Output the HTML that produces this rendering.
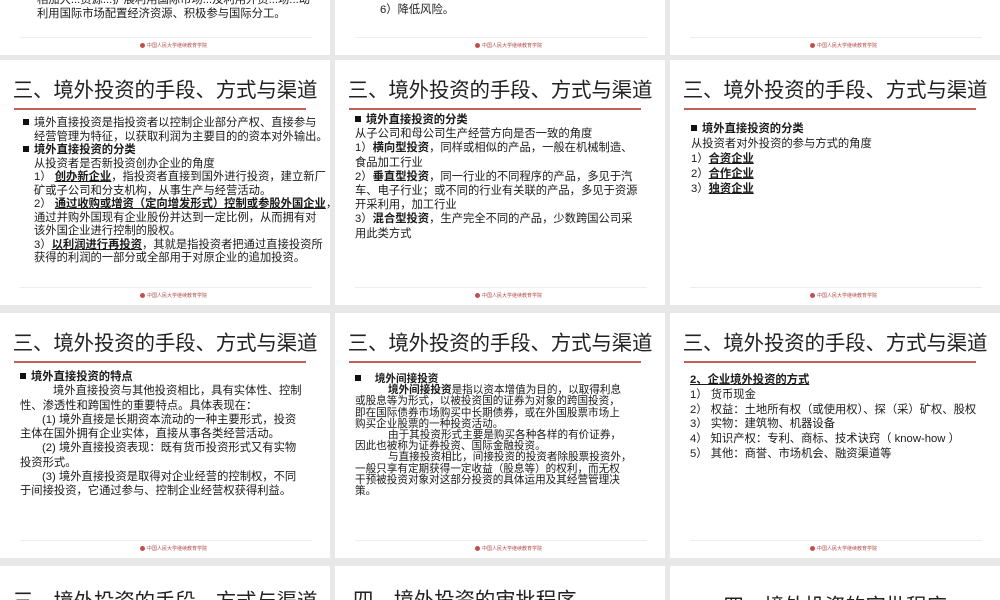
<!DOCTYPE html>
<html style="width:1000px;height:600px;overflow:hidden"><head><meta charset="utf-8"><style>
*{margin:0;padding:0;box-sizing:border-box}
body{width:1000px;height:600px;overflow:hidden;background:#e8e8e8;position:relative;font-family:"Liberation Sans","Noto Sans CJK SC",sans-serif;color:#1a1a1a}
.s{position:absolute;width:330px;height:245px;background:#fff;overflow:hidden}
.t{position:absolute;left:0;right:0;top:18px;text-align:center;font-size:20.5px;line-height:26px;color:#222;white-space:nowrap;letter-spacing:-0.2px}
.r{position:absolute;left:14px;width:292px;top:48px;height:2px;background:#c0605a}
.f{position:absolute;left:20px;width:292px;top:227px;height:1px;background:#eee}
.l{position:absolute;left:140px;top:233px;font-size:5px;color:#b0504a;white-space:nowrap;line-height:7px}
.l::before{content:"";display:inline-block;width:5px;height:5px;border-radius:50%;background:#c0504d;margin-right:2px;vertical-align:middle}
.b{position:absolute;font-size:11.3px;line-height:13.6px;white-space:nowrap;color:#1a1a1a}
.b b{font-weight:bold}
.u{text-decoration:underline}
.sq{display:inline-block;width:6px;height:6px;background:#111;margin-right:5px;vertical-align:1px}
.bot{height:34px}
</style></head><body>

<!-- top row -->
<div class="s" style="left:0;top:-190px">
 <div class="b" style="left:37px;top:184px">相加大...资源...扩展利用国际市场...及利用外资...场...动<br>利用国际市场配置经济资源、积极参与国际分工。</div>
 <div class="f"></div><div class="l">中国人民大学继续教育学院</div>
</div>
<div class="s" style="left:335px;top:-190px">
 <div class="b" style="left:45px;top:194px">6）降低风险。</div>
 <div class="f"></div><div class="l">中国人民大学继续教育学院</div>
</div>
<div class="s" style="left:670px;top:-190px">
 <div class="f"></div><div class="l">中国人民大学继续教育学院</div>
</div>

<!-- row 2 -->
<div class="s" style="left:0;top:60px">
 <div class="t">三、境外投资的手段、方式与渠道</div><div class="r"></div>
 <div class="b" style="left:23px;top:57px;line-height:13.5px"><span class="sq"></span>境外直接投资是指投资者以控制企业部分产权、直接参与<br><span style="padding-left:11px">经营管理为特征，以获取利润为主要目的的资本对外输出。</span><br><span class="sq"></span><b>境外直接投资的分类</b><br>
 <span style="padding-left:11px">从投资者是否新投资创办企业的角度</span><br>
 <span style="padding-left:11px">1）&nbsp;<b class="u">创办新企业</b>，指投资者直接到国外进行投资，建立新厂</span><br>
 <span style="padding-left:11px">矿或子公司和分支机构，从事生产与经营活动。</span><br>
 <span style="padding-left:11px">2）&nbsp;<b class="u">通过收购或增资（定向增发形式）控制或参股外国企业</b>，</span><br>
 <span style="padding-left:11px">通过并购外国现有企业股份并达到一定比例，从而拥有对</span><br>
 <span style="padding-left:11px">该外国企业进行控制的股权。</span><br>
 <span style="padding-left:11px">3）<b class="u">以利润进行再投资</b>，其就是指投资者把通过直接投资所</span><br>
 <span style="padding-left:11px">获得的利润的一部分或全部用于对原企业的追加投资。</span></div>
 <div class="f"></div><div class="l">中国人民大学继续教育学院</div>
</div>
<div class="s" style="left:335px;top:60px">
 <div class="t">三、境外投资的手段、方式与渠道</div><div class="r"></div>
 <div class="b" style="left:20px;top:53px;line-height:14.2px"><span class="sq"></span><b>境外直接投资的分类</b><br>从子公司和母公司生产经营方向是否一致的角度<br>1）<b>横向型投资</b>，同样或相似的产品，一般在机械制造、<br>食品加工行业<br>2）<b>垂直型投资</b>，同一行业的不同程序的产品，多见于汽<br>车、电子行业；或不同的行业有关联的产品，多见于资源<br>开采利用，加工行业<br>3）<b>混合型投资</b>，生产完全不同的产品，少数跨国公司采<br>用此类方式</div>
 <div class="f"></div><div class="l">中国人民大学继续教育学院</div>
</div>
<div class="s" style="left:670px;top:60px">
 <div class="t">三、境外投资的手段、方式与渠道</div><div class="r"></div>
 <div class="b" style="left:21px;top:62px;line-height:15px"><span class="sq"></span><b>境外直接投资的分类</b><br>从投资者对外投资的参与方式的角度<br>1）<b class="u">合资企业</b><br>2）<b class="u">合作企业</b><br>3）<b class="u">独资企业</b></div>
 <div class="f"></div><div class="l">中国人民大学继续教育学院</div>
</div>

<!-- row 3 -->
<div class="s" style="left:0;top:313px">
 <div class="t">三、境外投资的手段、方式与渠道</div><div class="r"></div>
 <div class="b" style="left:20px;top:57px;line-height:14.3px"><span class="sq"></span><b>境外直接投资的特点</b><br>
 <span style="padding-left:33px">境外直接投资与其他投资相比，具有实体性、控制</span><br>性、渗透性和跨国性的重要特点。具体表现在：<br>
 <span style="padding-left:22px">(1) 境外直接是长期资本流动的一种主要形式，投资</span><br>主体在国外拥有企业实体，直接从事各类经营活动。<br>
 <span style="padding-left:22px">(2) 境外直接投资表现：既有货币投资形式又有实物</span><br>投资形式。<br>
 <span style="padding-left:22px">(3) 境外直接投资是取得对企业经营的控制权，不同</span><br>于间接投资，它通过参与、控制企业经营权获得利益。</div>
 <div class="f"></div><div class="l">中国人民大学继续教育学院</div>
</div>
<div class="s" style="left:335px;top:313px">
 <div class="t">三、境外投资的手段、方式与渠道</div><div class="r"></div>
 <div class="b" style="left:20px;top:61px;font-size:10.6px;line-height:11.2px"><span class="sq"></span>&nbsp;&nbsp;&nbsp;<b>境外间接投资</b><br>
 <span style="padding-left:33px"><b>境外间接投资</b>是指以资本增值为目的，以取得利息</span><br>或股息等为形式，以被投资国的证券为对象的跨国投资，<br>即在国际债券市场购买中长期债券，或在外国股票市场上<br>购买企业股票的一种投资活动。<br>
 <span style="padding-left:33px">由于其投资形式主要是购买各种各样的有价证券，</span><br>因此也被称为证券投资、国际金融投资。<br>
 <span style="padding-left:33px">与直接投资相比，间接投资的投资者除股票投资外，</span><br>一般只享有定期获得一定收益（股息等）的权利，而无权<br>干预被投资对象对这部分投资的具体运用及其经营管理决<br>策。</div>
 <div class="f"></div><div class="l">中国人民大学继续教育学院</div>
</div>
<div class="s" style="left:670px;top:313px">
 <div class="t">三、境外投资的手段、方式与渠道</div><div class="r"></div>
 <div class="b" style="left:20px;top:60px;line-height:14.8px"><b class="u">2、企业境外投资的方式</b><br>1）&nbsp;货币现金<br>2）&nbsp;权益：土地所有权（或使用权）、探（采）矿权、股权<br>3）&nbsp;实物：建筑物、机器设备<br>4）&nbsp;知识产权：专利、商标、技术诀窍（ know-how ）<br>5）&nbsp;其他：商誉、市场机会、融资渠道等</div>
 <div class="f"></div><div class="l">中国人民大学继续教育学院</div>
</div>

<!-- row 4 -->
<div class="s bot" style="left:0;top:566px">
 <div class="t" style="top:23px">三、境外投资的手段、方式与渠道</div>
</div>
<div class="s bot" style="left:335px;top:566px">
 <div class="t" style="text-align:left;left:18px;top:22px">四、境外投资的审批程序</div>
</div>
<div class="s bot" style="left:670px;top:566px">
 <div class="t" style="top:28px;left:0px">四、境外投资的审批程序</div>
</div>
</body></html>
